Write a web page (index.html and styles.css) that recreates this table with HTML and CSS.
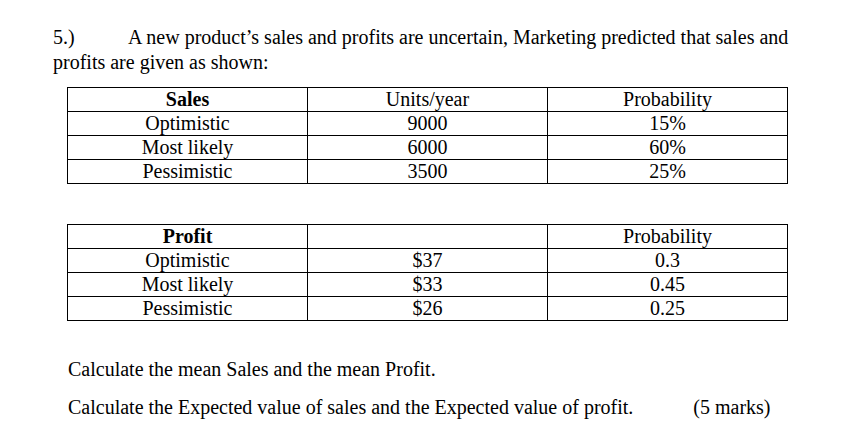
FILE: index.html
```html
<!DOCTYPE html>
<html>
<head>
<meta charset="utf-8">
<link rel="stylesheet" href="styles.css">
</head>
<body>
<main class="page">
  <p class="question"><span class="num">5.)</span><span>A new product’s sales and profits are uncertain, Marketing predicted that sales and</span><br><span>profits are given as shown:</span></p>

  <table class="data sales">
    <tr><th>Sales</th><td>Units/year</td><td>Probability</td></tr>
    <tr><td>Optimistic</td><td>9000</td><td>15%</td></tr>
    <tr><td>Most likely</td><td>6000</td><td>60%</td></tr>
    <tr><td>Pessimistic</td><td>3500</td><td>25%</td></tr>
  </table>

  <table class="data profit">
    <tr><th>Profit</th><td></td><td>Probability</td></tr>
    <tr><td>Optimistic</td><td>$37</td><td>0.3</td></tr>
    <tr><td>Most likely</td><td>$33</td><td>0.45</td></tr>
    <tr><td>Pessimistic</td><td>$26</td><td>0.25</td></tr>
  </table>

  <p class="task first">Calculate the mean Sales and the mean Profit.</p>
  <p class="task last"><span class="task-text">Calculate the Expected value of sales and the Expected value of profit.</span><span class="marks">(5 marks)</span></p>
</main>
</body>
</html>
```

FILE: styles.css
```css
html, body {
  margin: 0;
  padding: 0;
  background: #ffffff;
}

.page {
  font-family: "Liberation Serif", "Times New Roman", serif;
  font-size: 20px;
  color: #000000;
  padding: 25px 0 0 53px;
}

.question {
  margin: 0;
  width: 780px;
  line-height: 25px;
}

.num {
  display: inline-block;
  width: 75px;
}

.data {
  border-collapse: collapse;
  table-layout: fixed;
  width: 721px;
  margin-left: 14px;
  line-height: 23px;
}

.data th,
.data td {
  border: 1px solid #000000;
  padding: 0;
  text-align: center;
  height: 23px;
  font-weight: normal;
}

.data th {
  font-weight: bold;
}

.sales {
  margin-top: 12px;
}

.profit {
  margin-top: 40px;
}

.task {
  margin: 0 0 0 15px;
  line-height: 25px;
}

.task.first {
  margin-top: 36px;
}

.task.last {
  margin-top: 13px;
  display: flex;
}

.marks {
  margin-left: 60px;
}
```
